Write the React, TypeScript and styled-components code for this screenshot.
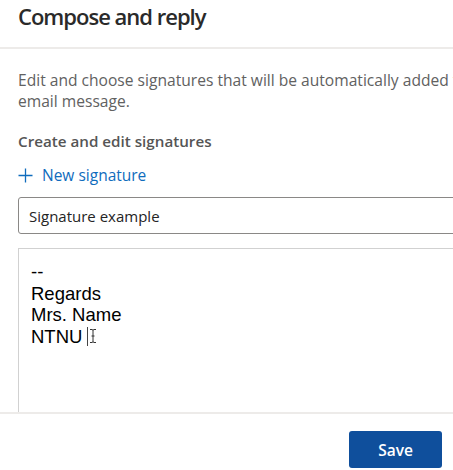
import styled, { createGlobalStyle } from 'styled-components';

const GlobalStyle = createGlobalStyle`
  html, body {
    margin: 0;
    padding: 0;
    background: #ffffff;
    overflow: hidden;
  }
  body {
    font-family: 'Open Sans', 'Noto Sans', sans-serif;
  }
`;

const Page = styled.div`
  width: 453px;
  height: 470px;
  display: flex;
  flex-direction: column;
  overflow: hidden;
  background: #ffffff;
`;

const ScrollArea = styled.div`
  flex: 1;
  min-height: 0;
  overflow: hidden;
`;

const Header = styled.header`
  height: 49px;
  padding-left: 18px;
  border-bottom: 2px solid #edebe9;
  box-sizing: border-box;
`;

const Title = styled.h1`
  margin: 0;
  padding-top: 0;
  font-size: 22px;
  font-weight: 600;
  line-height: 32px;
  color: #2a2a2a;
  letter-spacing: -1px;
`;

const Content = styled.section`
  width: 500px;
  padding: 21px 0 0 18px;
  display: flex;
  flex-direction: column;
`;

const Description = styled.p`
  margin: 0;
  font-size: 15.6px;
  line-height: 21px;
  color: #616161;
  white-space: nowrap;
`;

const SectionLabel = styled.h2`
  margin: 18px 0 0;
  font-size: 15.2px;
  font-weight: 600;
  line-height: 22px;
  color: #555555;
`;

const LinkButton = styled.button`
  display: flex;
  align-items: center;
  gap: 9px;
  margin: 12px 0 0;
  padding: 0;
  border: 0;
  background: none;
  font-family: inherit;
  font-size: 15.5px;
  line-height: 22px;
  color: #0f6cbd;
  cursor: pointer;
`;

const NameInput = styled.input`
  margin-top: 11px;
  height: 37px;
  box-sizing: border-box;
  padding: 0 10px;
  border: 1px solid #8a8886;
  border-radius: 3px;
  font-family: inherit;
  font-size: 15px;
  color: #242424;
  outline: none;
`;

const Editor = styled.div`
  margin-top: 14px;
  height: 200px;
  box-sizing: border-box;
  padding: 12px 12px;
  border: 1px solid #d1d1d1;
  border-right: 0;
  font-family: 'Liberation Sans', Arial, sans-serif;
  font-size: 18.5px;
  line-height: 21.5px;
  color: #000000;
`;

const Line = styled.div`
  display: flex;
  align-items: center;
`;

const Caret = styled.span`
  display: inline-block;
  width: 1px;
  height: 19px;
  margin-left: 5px;
  background: #444444;
`;

const Footer = styled.footer`
  height: 58px;
  flex-shrink: 0;
  border-top: 2px solid #edebe9;
  box-sizing: border-box;
  display: flex;
  justify-content: flex-end;
  align-items: flex-start;
  padding: 17px 11px 0 0;
`;

const PrimaryButton = styled.button`
  width: 93px;
  height: 37px;
  border: 0;
  border-radius: 3px;
  background: #0f4f9c;
  color: #ffffff;
  font-family: inherit;
  font-size: 15.5px;
  font-weight: 600;
  cursor: pointer;
`;

function PlusIcon() {
  return (
    <svg width="15" height="15" viewBox="0 0 15 15" aria-hidden="true">
      <path d="M7.5 0.5v14M0.5 7.5h14" stroke="#0f6cbd" strokeWidth="1.3" fill="none" />
    </svg>
  );
}

function IBeam() {
  return (
    <svg width="8" height="16" viewBox="0 0 8 16" aria-hidden="true" style={{ marginLeft: 1 }}>
      <path
        d="M1 1.5h2c0.6 0 1 0.4 1 1 0-0.6 0.4-1 1-1h2M1 14.5h2c0.6 0 1-0.4 1-1 0 0.6 0.4 1 1 1h2M4 2.5v11M2.5 8h3"
        stroke="#333333"
        strokeWidth="1"
        fill="none"
      />
    </svg>
  );
}

export default function App() {
  return (
    <Page>
      <GlobalStyle />
      <ScrollArea>
        <Header>
          <Title>Compose and reply</Title>
        </Header>
        <Content>
          <Description>
            Edit and choose signatures that will be automatically added to each
            <br />
            email message.
          </Description>
          <SectionLabel>Create and edit signatures</SectionLabel>
          <LinkButton>
            <PlusIcon />
            New signature
          </LinkButton>
          <NameInput defaultValue="Signature example" />
          <Editor>
            <Line>--</Line>
            <Line>Regards</Line>
            <Line>Mrs. Name</Line>
            <Line>
              NTNU
              <Caret />
              <IBeam />
            </Line>
          </Editor>
        </Content>
      </ScrollArea>
      <Footer>
        <PrimaryButton>Save</PrimaryButton>
      </Footer>
    </Page>
  );
}
